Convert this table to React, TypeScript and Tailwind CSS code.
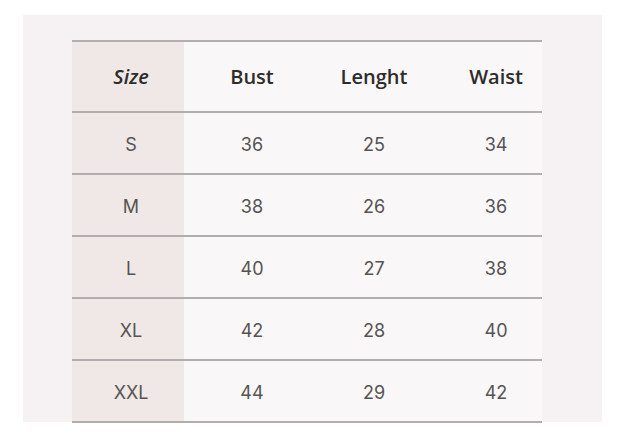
import React from 'react';

const rows = [
  { size: 'S', bust: '36', length: '25', waist: '34' },
  { size: 'M', bust: '38', length: '26', waist: '36' },
  { size: 'L', bust: '40', length: '27', waist: '38' },
  { size: 'XL', bust: '42', length: '28', waist: '40' },
  { size: 'XXL', bust: '44', length: '29', waist: '42' },
];

const grid = 'grid grid-cols-[112px_129px_122px_107px]';

export default function App() {
  return (
    <div className="w-[631px] h-[448px] bg-white pt-[15px] pl-[23px]">
      <div className="w-[579px] h-[407px] bg-[#f6f2f3] pl-[49px] pt-[25px]">
        <div className="w-[470px] border-t-2 border-[#b0aeae]">
          <div className={`${grid} h-[71px] border-b-2 border-[#b0aeae] font-['Open_Sans',sans-serif] font-semibold text-[20px] text-[#2e2c2c]`}>
            <div className="bg-[#efe8e6] flex items-center justify-center pl-[6px] italic">Size</div>
            <div className="bg-[#f9f7f7] flex items-center justify-center pl-[7px]">Bust</div>
            <div className="bg-[#f9f7f7] flex items-center justify-center">Lenght</div>
            <div className="bg-[#f9f7f7] flex items-center justify-center pl-[15px]">Waist</div>
          </div>
          {rows.map(r => (
            <div
              key={r.size}
              className={`${grid} h-[62px] border-b-2 border-[#b0aeae] font-['Inter',sans-serif] text-[18px] text-[#555353]`}
            >
              <div className="bg-[#efe8e6] flex items-center justify-center pl-[6px] pt-[3px]">{r.size}</div>
              <div className="bg-[#f9f7f7] flex items-center justify-center pl-[7px] pt-[3px]">{r.bust}</div>
              <div className="bg-[#f9f7f7] flex items-center justify-center pt-[3px]">{r.length}</div>
              <div className="bg-[#f9f7f7] flex items-center justify-center pl-[15px] pt-[3px]">{r.waist}</div>
            </div>
          ))}
        </div>
      </div>
    </div>
  );
}
